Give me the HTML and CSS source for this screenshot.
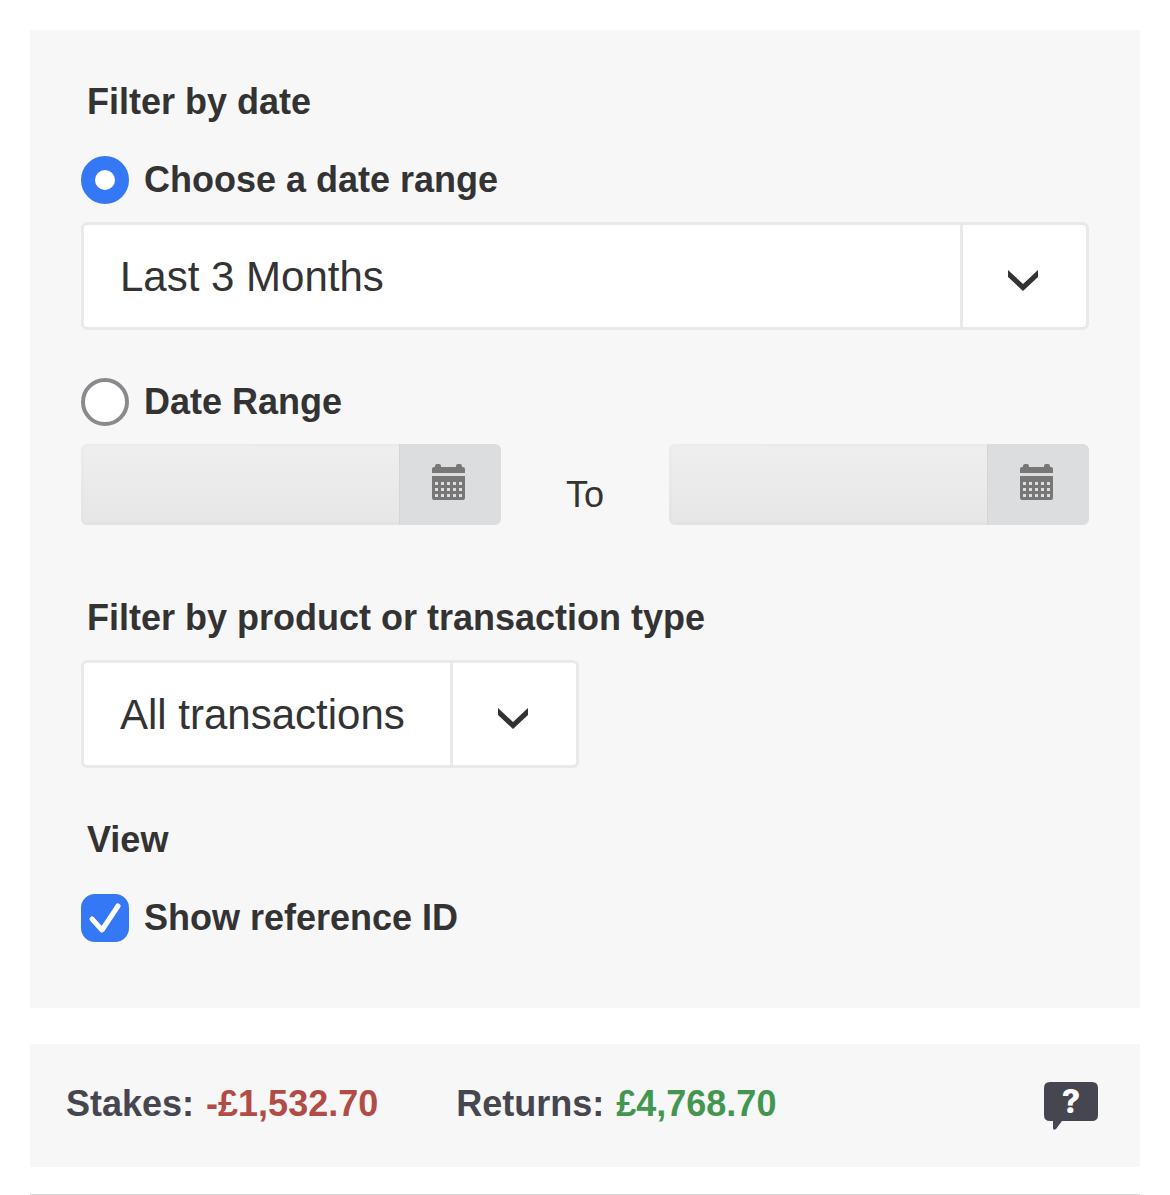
FILE: index.html
```html
<!DOCTYPE html>
<html lang="en">

<head>
    <meta charset="UTF-8">
    <meta name="viewport" content="width=device-width, initial-scale=1.0">
    <title>Account History</title>
    <link rel="stylesheet" href="styles.css">
</head>

<body>
    <form class="filters" id="filters">
        <h2 class="filter-title">Filter by date</h2>
        <div class="option">
            <input type="radio" id="presetRange" name="dateFilter" value="preset" checked>
            <label for="presetRange">Choose a date range</label>
        </div>
        <div class="select-box">
            <select id="period" aria-label="Date range">
                <option>Last 3 Months</option>
                <option>Last 6 Months</option>
                <option>Last 12 Months</option>
            </select>
            <span class="select-arrow">
                <svg width="30" height="21" viewBox="0 0 30 21"><path d="M0 0L15 14L30 0V7L15 21L0 7Z"/></svg>
            </span>
        </div>

        <div class="option option-spaced">
            <input type="radio" id="customRange" name="dateFilter" value="custom">
            <label for="customRange">Date Range</label>
        </div>
        <div class="date-row">
            <div class="date-field">
                <input type="text" id="dateFrom" aria-label="From date" disabled>
                <button type="button" aria-label="Open from calendar" disabled>
                    <svg width="33" height="36" viewBox="0 0 33 36">
                        <path d="M0 9V5Q0 3 2 3H3V2Q3 0 5 0H7Q9 0 9 2V3H24V2Q24 0 26 0H28Q30 0 30 2V3H31Q33 3 33 5V9Z"/>
                        <path fill-rule="evenodd" d="M0 12H33V34Q33 36 31 36H2Q0 36 0 34ZM3 18v3h3v-3zM9 18v3h3v-3zM15 18v3h3v-3zM21 18v3h3v-3zM27 18v3h3v-3zM3 24v3h3v-3zM9 24v3h3v-3zM15 24v3h3v-3zM21 24v3h3v-3zM27 24v3h3v-3zM3 30v3h3v-3zM9 30v3h3v-3zM15 30v3h3v-3zM21 30v3h3v-3zM27 30v3h3v-3z"/>
                    </svg>
                </button>
            </div>
            <span class="date-to">To</span>
            <div class="date-field">
                <input type="text" id="dateTo" aria-label="To date" disabled>
                <button type="button" aria-label="Open to calendar" disabled>
                    <svg width="33" height="36" viewBox="0 0 33 36">
                        <path d="M0 9V5Q0 3 2 3H3V2Q3 0 5 0H7Q9 0 9 2V3H24V2Q24 0 26 0H28Q30 0 30 2V3H31Q33 3 33 5V9Z"/>
                        <path fill-rule="evenodd" d="M0 12H33V34Q33 36 31 36H2Q0 36 0 34ZM3 18v3h3v-3zM9 18v3h3v-3zM15 18v3h3v-3zM21 18v3h3v-3zM27 18v3h3v-3zM3 24v3h3v-3zM9 24v3h3v-3zM15 24v3h3v-3zM21 24v3h3v-3zM27 24v3h3v-3zM3 30v3h3v-3zM9 30v3h3v-3zM15 30v3h3v-3zM21 30v3h3v-3zM27 30v3h3v-3z"/>
                    </svg>
                </button>
            </div>
        </div>

        <h2 class="filter-title"><label for="product">Filter by product or transaction type</label></h2>
        <div class="select-box select-box-small">
            <select id="product">
                <option>All transactions</option>
                <option>Deposits</option>
                <option>Withdrawals</option>
            </select>
            <span class="select-arrow">
                <svg width="30" height="21" viewBox="0 0 30 21"><path d="M0 0L15 14L30 0V7L15 21L0 7Z"/></svg>
            </span>
        </div>

        <h2 class="filter-title option-spaced">View</h2>
        <div class="option">
            <input type="checkbox" id="showReference" checked>
            <label for="showReference">Show reference ID</label>
            <svg class="tick" width="48" height="48" viewBox="0 0 48 48"><path d="M11 25L21 36L37 12"/></svg>
        </div>
    </form>

    <div class="totals">
        <div class="total">Stakes: <span class="amount negative">-£1,532.70</span></div>
        <div class="total">Returns: <span class="amount positive">£4,768.70</span></div>
        <button type="button" class="help" aria-label="Help">
            <svg width="54" height="48" viewBox="0 0 54 48">
                <path d="M6 0H48Q54 0 54 6V33Q54 39 48 39H18L12 47Q9 49 9 46V39H6Q0 39 0 33V6Q0 0 6 0Z"/>
                <text x="27" y="31" text-anchor="middle">?</text>
            </svg>
        </button>
    </div>
    <hr>
</body>

</html>
```
FILE: styles.css
```css
* {
    box-sizing: border-box;
}

body {
    margin: 0;
    padding: 30px 30px 0;
    background-color: #ffffff;
    color: #333333;
    font-family: Arial, "Liberation Sans", sans-serif;
    font-size: 36px;
    line-height: 48px;
}

.filters {
    background-color: #f7f7f7;
    padding: 48px 51px 66px;
}

.filter-title {
    margin: 0;
    padding-left: 6px;
    font-size: 36px;
    font-weight: bold;
}

/* radios and tick box */
.option {
    position: relative;
    display: flex;
    align-items: center;
    gap: 15px;
    font-weight: bold;
}

.filter-title + .option {
    margin-top: 30px;
}

.option-spaced {
    margin-top: 48px;
}

.option input {
    appearance: none;
    flex: none;
    width: 48px;
    height: 48px;
    margin: 0;
    background-color: #ffffff;
    border: 4px solid #8a8a8e;
    border-radius: 50%;
}

.option input:checked {
    border: 14px solid #3478f6;
}

.option input[type="checkbox"] {
    border-radius: 14px;
}

.option input[type="checkbox"]:checked {
    background-color: #3478f6;
}

.tick {
    display: none;
    position: absolute;
    left: 0;
    top: 0;
    fill: none;
    stroke: #ffffff;
    stroke-width: 5;
    stroke-linecap: round;
    stroke-linejoin: round;
    pointer-events: none;
}

.option input:checked ~ .tick {
    display: block;
}

/* drop-downs */
.select-box {
    position: relative;
    margin-top: 18px;
}

.select-box-small {
    width: 498px;
    max-width: 100%;
}

.select-box select {
    appearance: none;
    display: block;
    width: 100%;
    height: 108px;
    padding: 0 129px 0 36px;
    background-color: #ffffff;
    border: 3px solid #e9e9e9;
    border-radius: 6px;
    color: #333333;
    font-family: inherit;
    font-size: 42px;
}

.select-arrow {
    position: absolute;
    top: 0;
    right: 0;
    bottom: 0;
    width: 129px;
    display: flex;
    align-items: center;
    justify-content: center;
    padding: 9px 6px 0 0;
    border-left: 3px solid #e9e9e9;
    fill: #333333;
    pointer-events: none;
}

/* from and to dates */
.date-row {
    display: grid;
    grid-template-columns: minmax(0, 5fr) minmax(0, 2fr) minmax(0, 5fr);
    margin: 18px 0 69px;
}

.date-field {
    display: flex;
    height: 81px;
}

.date-field input {
    flex: 1;
    min-width: 0;
    background: linear-gradient(#efefef, #e6e6e6) border-box;
    border: 3px solid rgba(0, 0, 0, 0.01);
    border-right: 0;
    border-radius: 6px 0 0 6px;
    font-size: 36px;
}

.date-field button {
    display: flex;
    align-items: center;
    justify-content: center;
    width: 102px;
    padding: 0 5px 5px 0;
    background-color: #dcdddf;
    border: 0;
    border-left: 1px solid #d4d5d7;
    border-radius: 0 6px 6px 0;
    fill: #777777;
}

.date-to {
    align-self: end;
    line-height: 60px;
    text-align: center;
}

/* totals bar */
.totals {
    display: flex;
    align-items: flex-start;
    gap: 78px;
    margin-top: 36px;
    padding: 36px 42px 37px 36px;
    background-color: #f7f7f7;
    color: #464650;
    font-weight: bold;
}

.total {
    display: flex;
    gap: 12px;
}

.negative {
    color: #b24c46;
}

.positive {
    color: #42964f;
}

.help {
    margin-left: auto;
    padding: 2px 0 0;
    background: none;
    border: 0;
    fill: #464650;
}

.help svg {
    display: block;
}

.help text {
    fill: #ffffff;
    font-family: Inter, sans-serif;
    font-size: 32px;
    font-weight: 800;
}

hr {
    margin: 27px 0 0;
    border: 0;
    border-top: 1px solid #d8d8d8;
}
```
